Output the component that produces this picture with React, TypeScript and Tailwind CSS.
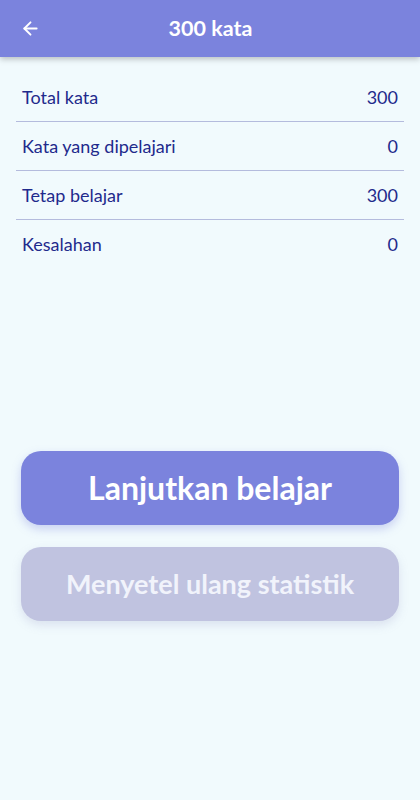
import { ArrowLeft } from "lucide-react";

const stats = [
  { label: "Total kata", value: 300 },
  { label: "Kata yang dipelajari", value: 0 },
  { label: "Tetap belajar", value: 300 },
  { label: "Kesalahan", value: 0 },
];

export default function App() {
  return (
    <div
      className="min-h-[800px] w-full bg-[#f1fafd] flex flex-col"
      style={{ fontFamily: "Lato, 'Noto Sans', sans-serif" }}
    >
      {/* HEADER */}
      <header className="h-[57px] bg-[#7b83dd] flex items-center px-[20px] shadow-[0_2px_6px_rgba(0,0,0,0.25)]">
        <ArrowLeft size={21} strokeWidth={2.2} className="text-white" />
        <h1 className="flex-1 text-center text-white text-[21.5px] font-bold pr-[20px]">
          300 kata
        </h1>
      </header>

      {/* STATS */}
      <section className="px-[16px] pt-[16px]">
        {stats.map((s, i) => (
          <div
            key={s.label}
            className={`flex items-center justify-between px-[6px] h-[49px] text-[18px] text-[#1f2a8c] ${
              i < stats.length - 1 ? "border-b-[1.5px] border-[#b4bbdd]" : ""
            }`}
          >
            <span>{s.label}</span>
            <span>{s.value}</span>
          </div>
        ))}
      </section>

      {/* ACTIONS */}
      <section className="px-[21px] pt-[182px] flex flex-col gap-[22px]">
        <button className="h-[74px] rounded-[20px] bg-[#7b83dd] text-white text-[32px] font-bold shadow-[0_4px_10px_rgba(123,131,221,0.35)]">
          Lanjutkan belajar
        </button>
        <button className="h-[74px] rounded-[20px] bg-[#c0c3e0] text-[#f1f3fb] text-[27px] font-bold shadow-[0_4px_10px_rgba(150,155,200,0.25)]">
          Menyetel ulang statistik
        </button>
      </section>
    </div>
  );
}
